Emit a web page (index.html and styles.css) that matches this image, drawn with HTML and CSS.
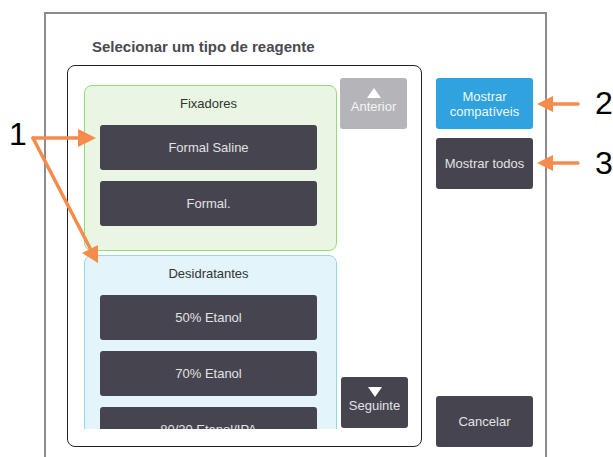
FILE: index.html
```html
<!DOCTYPE html>
<html lang="pt-BR">
<head>
  <meta charset="UTF-8">
  <title>Selecionar um tipo de reagente</title>
  <link rel="stylesheet" href="styles.css">
</head>
<body>

<div class="frame">
  <h1 class="title">Selecionar um tipo de reagente</h1>

  <div class="main">
    <div class="panel">
      <div class="list">
        <div class="group green">
          <div class="group-title">Fixadores</div>
          <button class="reagent">Formal Saline</button>
          <button class="reagent">Formal.</button>
        </div>
        <div class="group blue">
          <div class="group-title">Desidratantes</div>
          <button class="reagent">50% Etanol</button>
          <button class="reagent">70% Etanol</button>
          <button class="reagent">80/20 Etanol/IPA</button>
        </div>
      </div>
      <div class="nav">
        <button class="nav-btn disabled"><span class="tri up"></span>Anterior</button>
        <button class="nav-btn"><span class="tri down"></span>Seguinte</button>
      </div>
    </div>

    <div class="side">
      <button class="side-btn active">Mostrar<br>compatíveis</button>
      <button class="side-btn">Mostrar todos</button>
      <button class="side-btn cancel">Cancelar</button>
    </div>
  </div>
</div>

<!-- anotações -->
<svg class="callouts" width="613" height="457" viewBox="0 0 613 457">
  <g stroke="#f68b4c" stroke-width="3.5" fill="none" stroke-linecap="round">
    <line x1="33" y1="138" x2="80" y2="138" />
    <line x1="33" y1="138" x2="90" y2="248" />
    <line x1="578" y1="104" x2="550" y2="104" />
    <line x1="578" y1="163" x2="550" y2="163" />
  </g>
  <g fill="#f68b4c">
    <polygon points="96,138 78,129 78,147" />
    <polygon points="98,263 82,253 98,245" />
    <polygon points="537,104 553,96 553,112" />
    <polygon points="537,163 553,155 553,171" />
  </g>
</svg>
<span class="num n1">1</span>
<span class="num n2">2</span>
<span class="num n3">3</span>

</body>
</html>
```

FILE: styles.css
```css
body {
  margin: 0;
  background: #fff;
  font-family: 'Liberation Sans', Arial, sans-serif;
  width: 613px;
  height: 457px;
  overflow: hidden;
  position: relative;
}
.frame {
  margin: 12px 0 0 44px;
  width: 499px;
  height: 460px;
  border: 2px solid #8c8c8c;
  border-bottom: none;
}
.title {
  margin: 24px 0 9px 46px;
  font-size: 15px;
  line-height: 18px;
  font-weight: bold;
  color: #4a4a50;
}
.main {
  display: flex;
  gap: 14px;
  margin-left: 21px;
}
.panel {
  box-sizing: border-box;
  width: 355px;
  height: 382px;
  border: 1px solid #222;
  border-radius: 8px;
  padding: 12px 0 18px 16px;
  display: flex;
}
.list {
  margin-top: 7px;
  width: 253px;
  height: 344px;
  overflow: hidden;
}
.group {
  border: 1px solid;
  border-radius: 8px;
  padding: 0 19px 24px 15px;
}
.group.green {
  background: #e9f6e3;
  border-color: #99da78;
}
.group.blue {
  margin-top: 4px;
  background: #e3f5fa;
  border-color: #96d6ec;
}
.group-title {
  padding-top: 10px;
  line-height: 16px;
  margin-bottom: 13px;
  text-align: center;
  font-size: 13px;
  color: #333;
}
button {
  font-family: inherit;
  font-size: 13px;
  border: none;
  cursor: pointer;
  padding: 0;
}
.reagent {
  display: block;
  width: 217px;
  height: 45px;
  margin-bottom: 11px;
  background: #46454f;
  color: #e2e2e4;
  border-radius: 3px;
}
.reagent:last-child {
  margin-bottom: 0;
}
.nav {
  margin-left: 3px;
  width: 68px;
  display: flex;
  flex-direction: column;
  justify-content: space-between;
}
.nav-btn {
  width: 67px;
  height: 51px;
  border-radius: 3px;
  background: #46454f;
  color: #e2e2e4;
  display: flex;
  flex-direction: column;
  align-items: center;
  justify-content: center;
  padding-bottom: 7px;
  line-height: 13px;
}
.nav-btn.disabled {
  background: #b5b4b9;
  color: #f4f4f6;
}
.nav-btn:last-child {
  margin-left: 1px;
}
.tri {
  width: 0;
  height: 0;
  border-left: 7px solid transparent;
  border-right: 7px solid transparent;
  margin-bottom: 2px;
}
.tri.up {
  border-bottom: 10px solid #fff;
}
.tri.down {
  border-top: 10px solid #fff;
}
.side {
  width: 97px;
  display: flex;
  flex-direction: column;
}
.side-btn {
  height: 51px;
  border-radius: 3px;
  background: #46454f;
  color: #e2e2e4;
  line-height: 15px;
  margin-top: 9px;
}
.side-btn.active {
  margin-top: 13px;
  background: #30a3de;
  color: #eef7fc;
}
.side-btn.cancel {
  margin-top: auto;
}
.callouts {
  position: absolute;
  left: 0;
  top: 0;
}
.num {
  position: absolute;
  font-size: 32px;
  line-height: 32px;
  color: #000;
}
.n1 { left: 9px; top: 118px; }
.n2 { left: 595px; top: 87px; }
.n3 { left: 595px; top: 147px; }
```
